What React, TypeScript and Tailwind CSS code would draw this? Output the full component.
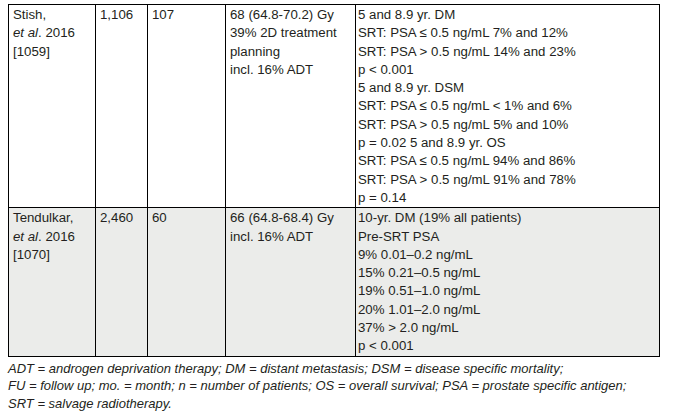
const rows = [
  {
    author: "Stish,",
    year: "2016",
    ref: "[1059]",
    n: "1,106",
    fu: "107",
    dose: ["68 (64.8-70.2) Gy", "39% 2D treatment", "planning", "incl. 16% ADT"],
    outcome: [
      "5 and 8.9 yr. DM",
      "SRT: PSA \u2264 0.5 ng/mL 7% and 12%",
      "SRT: PSA > 0.5 ng/mL 14% and 23%",
      "p < 0.001",
      "5 and 8.9 yr. DSM",
      "SRT: PSA \u2264 0.5 ng/mL < 1% and 6%",
      "SRT: PSA > 0.5 ng/mL 5% and 10%",
      "p = 0.02 5 and 8.9 yr. OS",
      "SRT: PSA \u2264 0.5 ng/mL 94% and 86%",
      "SRT: PSA > 0.5 ng/mL 91% and 78%",
      "p = 0.14",
    ],
    shaded: false,
  },
  {
    author: "Tendulkar,",
    year: "2016",
    ref: "[1070]",
    n: "2,460",
    fu: "60",
    dose: ["66 (64.8-68.4) Gy", "incl. 16% ADT"],
    outcome: [
      "10-yr. DM (19% all patients)",
      "Pre-SRT PSA",
      "9% 0.01\u20130.2 ng/mL",
      "15% 0.21\u20130.5 ng/mL",
      "19% 0.51\u20131.0 ng/mL",
      "20% 1.01\u20132.0 ng/mL",
      "37% > 2.0 ng/mL",
      "p < 0.001",
    ],
    shaded: true,
  },
];

function Lines({ items }: { items: string[] }) {
  return (
    <>
      {items.map((t, i) => (
        <div key={i}>{t}</div>
      ))}
    </>
  );
}

export default function App() {
  return (
    <div
      className="bg-white text-[#231f20] w-[674px] h-[418px] pt-[4px] pl-[8px] text-[13px] leading-[18.3px]"
      style={{ fontFamily: '"Liberation Sans", Arial, sans-serif' }}
    >
      <table className="border-collapse table-fixed w-[651px] text-[13.25px]">
        <colgroup>
          <col className="w-[87px]" />
          <col className="w-[52px]" />
          <col className="w-[78px]" />
          <col className="w-[130px]" />
          <col className="w-[304px]" />
        </colgroup>
        <tbody>
          {rows.map((r) => (
            <tr key={r.ref} className={r.shaded ? "bg-[#ebecea]" : "bg-white"}>
              <td className="border border-black align-top pl-[4px] pt-[1px] pb-0">
                <div>{r.author}</div>
                <div>
                  <i>et al</i>. {r.year}
                </div>
                <div>{r.ref}</div>
              </td>
              <td className="border border-black align-top pl-[4px] pt-[1px]">{r.n}</td>
              <td className="border border-black align-top pl-[4px] pt-[1px]">{r.fu}</td>
              <td className="border border-black align-top pl-[4px] pt-[1px]">
                <Lines items={r.dose} />
              </td>
              <td className="border border-black align-top pl-[2px] pt-[1px]">
                <Lines items={r.outcome} />
              </td>
            </tr>
          ))}
        </tbody>
      </table>
      <div className="italic mt-[3px] leading-[17.7px]">
        <div>ADT = androgen deprivation therapy; DM = distant metastasis; DSM = disease specific mortality;</div>
        <div>FU = follow up; mo. = month; n = number of patients; OS = overall survival; PSA = prostate specific antigen;</div>
        <div>SRT = salvage radiotherapy.</div>
      </div>
    </div>
  );
}
